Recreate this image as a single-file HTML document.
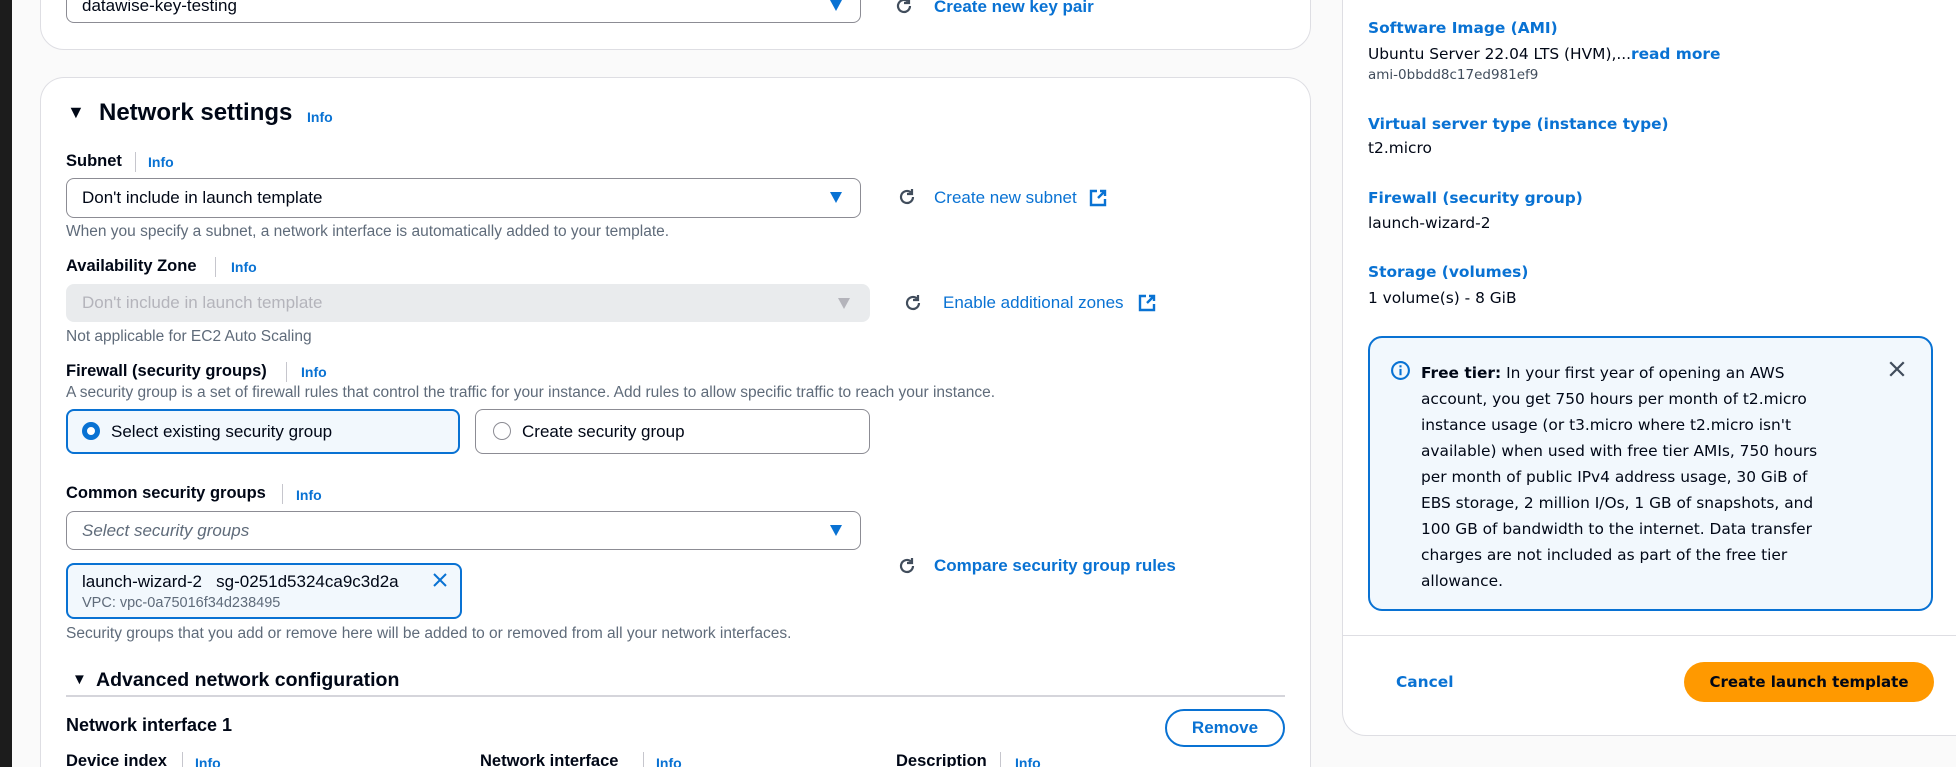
<!DOCTYPE html>
<html><head><meta charset="utf-8"><style>
*{box-sizing:border-box;margin:0;padding:0}
html,body{width:1956px;height:767px;overflow:hidden}
body{background:#fafafa;position:relative;font-family:"Liberation Sans",sans-serif;color:#000716;font-size:17px}
#w{position:absolute;left:0;top:0;width:1956px;height:767px;overflow:hidden}
.a{position:absolute;white-space:nowrap;line-height:20px}
.b{font-weight:bold}
.l{color:#0972d3}
.ln{color:#0972d3;font-weight:bold}
.s{color:#5f6b7a;font-size:15.5px}
.lbl{font-weight:bold;font-size:16.5px}
.info{color:#0972d3;font-weight:bold;font-size:14px}
.sep{position:absolute;width:1px;height:20px;background:#c6c6cd}
.card{position:absolute;background:#fff;border:1px solid #dedee3;border-radius:24px}
.sel{position:absolute;background:#fff;border:1.5px solid #8c8c94;border-radius:8px}
.arr{position:absolute;width:0;height:0;border-left:6px solid transparent;border-right:6px solid transparent;border-top:11px solid #0972d3}
.r{position:absolute}
.rp{font-family:"DejaVu Sans",sans-serif;font-size:15.4px}
</style></head><body><div id="w">
<div style="position:absolute;left:0;top:0;width:12px;height:767px;background:#1c1c1c"></div>

<div class="card" style="left:40px;top:-60px;width:1271px;height:110px"></div>
<div class="sel" style="left:66px;top:-20px;width:795px;height:43px"></div>
<div class="a" style="left:82px;top:-4px">datawise-key-testing</div>
<div class="arr" style="left:830px;top:0px"></div>
<svg class="r" style="left:894px;top:-4px" width="20" height="20" viewBox="0 0 20 20"><path d="M16 10a6 6 0 1 1-2-4.5" fill="none" stroke="#414d5c" stroke-width="2.2"/><path d="M15 2v5h-5" fill="none" stroke="#414d5c" stroke-width="2.2"/></svg>
<div class="a ln" style="left:934px;top:-3px">Create new key pair</div>

<div class="card" style="left:40px;top:77px;width:1271px;height:690px;border-bottom:none;border-radius:24px 24px 0 0"></div>
<div class="a" style="left:67px;top:102px;font-size:18px">&#9660;</div>
<div class="a b" style="left:99px;top:100px;font-size:24px;line-height:26px">Network settings</div>
<div class="a info" style="left:307px;top:107px">Info</div>

<div class="a lbl" style="left:66px;top:151px">Subnet</div>
<div class="sep" style="left:135px;top:152px"></div>
<div class="a info" style="left:148px;top:152px">Info</div>
<div class="sel" style="left:66px;top:178px;width:795px;height:40px"></div>
<div class="a" style="left:82px;top:188px">Don't include in launch template</div>
<div class="arr" style="left:830px;top:192px"></div>
<svg class="r" style="left:897px;top:187px" width="20" height="20" viewBox="0 0 20 20"><path d="M16 10a6 6 0 1 1-2-4.5" fill="none" stroke="#414d5c" stroke-width="2.2"/><path d="M15 2v5h-5" fill="none" stroke="#414d5c" stroke-width="2.2"/></svg>
<div class="a l" style="left:934px;top:188px">Create new subnet</div>
<svg class="r" style="left:1089px;top:189px" width="18" height="18" viewBox="0 0 18 18"><path d="M8 2H2v14h14v-6M11 2h5v5M16 2l-7 7" fill="none" stroke="#0972d3" stroke-width="2.4"/></svg>
<div class="a s" style="left:66px;top:222px">When you specify a subnet, a network interface is automatically added to your template.</div>

<div class="a lbl" style="left:66px;top:256px">Availability Zone</div>
<div class="sep" style="left:215px;top:257px"></div>
<div class="a info" style="left:231px;top:257px">Info</div>
<div class="r" style="left:66px;top:284px;width:804px;height:38px;background:#e9ebed;border-radius:8px"></div>
<div class="a" style="left:82px;top:293px;color:#b4b4bb">Don't include in launch template</div>
<div class="arr" style="left:838px;top:298px;border-top-color:#b4b4bb"></div>
<svg class="r" style="left:903px;top:293px" width="20" height="20" viewBox="0 0 20 20"><path d="M16 10a6 6 0 1 1-2-4.5" fill="none" stroke="#414d5c" stroke-width="2.2"/><path d="M15 2v5h-5" fill="none" stroke="#414d5c" stroke-width="2.2"/></svg>
<div class="a l" style="left:943px;top:293px">Enable additional zones</div>
<svg class="r" style="left:1138px;top:294px" width="18" height="18" viewBox="0 0 18 18"><path d="M8 2H2v14h14v-6M11 2h5v5M16 2l-7 7" fill="none" stroke="#0972d3" stroke-width="2.4"/></svg>
<div class="a s" style="left:66px;top:327px">Not applicable for EC2 Auto Scaling</div>

<div class="a lbl" style="left:66px;top:361px">Firewall (security groups)</div>
<div class="sep" style="left:286px;top:362px"></div>
<div class="a info" style="left:301px;top:362px">Info</div>
<div class="a s" style="left:66px;top:383px">A security group is a set of firewall rules that control the traffic for your instance. Add rules to allow specific traffic to reach your instance.</div>

<div class="r" style="left:66px;top:409px;width:394px;height:45px;background:#f2f8fd;border:2px solid #0972d3;border-radius:8px"></div>
<div class="r" style="left:82px;top:422px;width:18px;height:18px;border-radius:50%;border:5px solid #0972d3;background:#fff"></div>
<div class="a" style="left:111px;top:422px">Select existing security group</div>
<div class="r" style="left:475px;top:409px;width:395px;height:45px;background:#fff;border:1.5px solid #8c8c94;border-radius:8px"></div>
<div class="r" style="left:493px;top:422px;width:18px;height:18px;border-radius:50%;border:1.5px solid #8c8c94"></div>
<div class="a" style="left:522px;top:422px">Create security group</div>

<div class="a lbl" style="left:66px;top:483px">Common security groups</div>
<div class="sep" style="left:282px;top:484px"></div>
<div class="a info" style="left:296px;top:485px">Info</div>
<div class="sel" style="left:66px;top:511px;width:795px;height:39px"></div>
<div class="a" style="left:82px;top:521px;font-style:italic;color:#5f6b7a">Select security groups</div>
<div class="arr" style="left:830px;top:525px"></div>

<div class="r" style="left:66px;top:563px;width:396px;height:56px;background:#f2f8fd;border:2px solid #0972d3;border-radius:8px"></div>
<div class="a" style="left:82px;top:572px">launch-wizard-2&nbsp;&nbsp; sg-0251d5324ca9c3d2a</div>
<svg class="r" style="left:432px;top:572px" width="16" height="16" viewBox="0 0 16 16"><path d="M2 2l12 12M14 2L2 14" stroke="#0972d3" stroke-width="2"/></svg>
<div class="a s" style="left:82px;top:593px;font-size:14.5px">VPC: vpc-0a75016f34d238495</div>
<svg class="r" style="left:897px;top:556px" width="20" height="20" viewBox="0 0 20 20"><path d="M16 10a6 6 0 1 1-2-4.5" fill="none" stroke="#414d5c" stroke-width="2.2"/><path d="M15 2v5h-5" fill="none" stroke="#414d5c" stroke-width="2.2"/></svg>
<div class="a ln" style="left:934px;top:556px">Compare security group rules</div>
<div class="a s" style="left:66px;top:624px">Security groups that you add or remove here will be added to or removed from all your network interfaces.</div>

<div class="a" style="left:72px;top:670px;font-size:15px">&#9660;</div>
<div class="a b" style="left:96px;top:669px;font-size:19.5px;line-height:22px">Advanced network configuration</div>
<div class="r" style="left:66px;top:695px;width:1219px;height:2px;background:#d5d5db"></div>
<div class="a" style="left:66px;top:714px;font-size:18px;line-height:22px;font-weight:bold">Network interface 1</div>
<div class="r" style="left:1165px;top:709px;width:120px;height:38px;border:2px solid #0972d3;border-radius:20px;background:#fff"></div>
<div class="a ln" style="left:1165px;top:718px;width:120px;text-align:center">Remove</div>
<div class="a lbl" style="left:66px;top:751px">Device index</div>
<div class="sep" style="left:182px;top:752px"></div>
<div class="a info" style="left:195px;top:753px">Info</div>
<div class="a lbl" style="left:480px;top:751px">Network interface</div>
<div class="sep" style="left:643px;top:752px"></div>
<div class="a info" style="left:656px;top:753px">Info</div>
<div class="a lbl" style="left:896px;top:751px">Description</div>
<div class="sep" style="left:1000px;top:752px"></div>
<div class="a info" style="left:1015px;top:753px">Info</div>

<div class="card" style="left:1342px;top:-40px;width:700px;height:776px"></div>
<div class="a rp ln" style="left:1368px;top:18px">Software Image (AMI)</div>
<div class="a rp" style="left:1368px;top:44px">Ubuntu Server 22.04 LTS (HVM),...<span class="ln">read more</span></div>
<div class="a rp" style="left:1368px;top:65px;font-size:13.5px;color:#414d5c">ami-0bbdd8c17ed981ef9</div>
<div class="a rp ln" style="left:1368px;top:114px">Virtual server type (instance type)</div>
<div class="a rp" style="left:1368px;top:138px">t2.micro</div>
<div class="a rp ln" style="left:1368px;top:188px">Firewall (security group)</div>
<div class="a rp" style="left:1368px;top:213px">launch-wizard-2</div>
<div class="a rp ln" style="left:1368px;top:262px">Storage (volumes)</div>
<div class="a rp" style="left:1368px;top:288px">1 volume(s) - 8 GiB</div>

<div class="r" style="left:1368px;top:336px;width:565px;height:275px;background:#f2f8fd;border:2px solid #0972d3;border-radius:14px"></div>
<svg class="r" style="left:1390px;top:360px" width="21" height="21" viewBox="0 0 20 20"><circle cx="10" cy="10" r="8" fill="none" stroke="#0972d3" stroke-width="2"/><path d="M10 8.5v6M10 5v2" stroke="#0972d3" stroke-width="2"/></svg>
<svg class="r" style="left:1888px;top:360px" width="18" height="18" viewBox="0 0 16 16"><path d="M2 2l12 12M14 2L2 14" stroke="#414d5c" stroke-width="2"/></svg>
<div class="a rp" style="left:1421px;top:360px;line-height:26px"><b>Free tier:</b> In your first year of opening an AWS<br>account, you get 750 hours per month of t2.micro<br>instance usage (or t3.micro where t2.micro isn't<br>available) when used with free tier AMIs, 750 hours<br>per month of public IPv4 address usage, 30 GiB of<br>EBS storage, 2 million I/Os, 1 GB of snapshots, and<br>100 GB of bandwidth to the internet. Data transfer<br>charges are not included as part of the free tier<br>allowance.</div>

<div class="r" style="left:1343px;top:635px;width:620px;height:1px;background:#dedee3"></div>
<div class="a rp ln" style="left:1396px;top:672px">Cancel</div>
<div class="r" style="left:1684px;top:662px;width:250px;height:40px;background:#ff9900;border-radius:20px"></div>
<div class="a rp b" style="left:1684px;top:672px;width:250px;text-align:center;font-size:15px">Create launch template</div>
</div></body></html>
